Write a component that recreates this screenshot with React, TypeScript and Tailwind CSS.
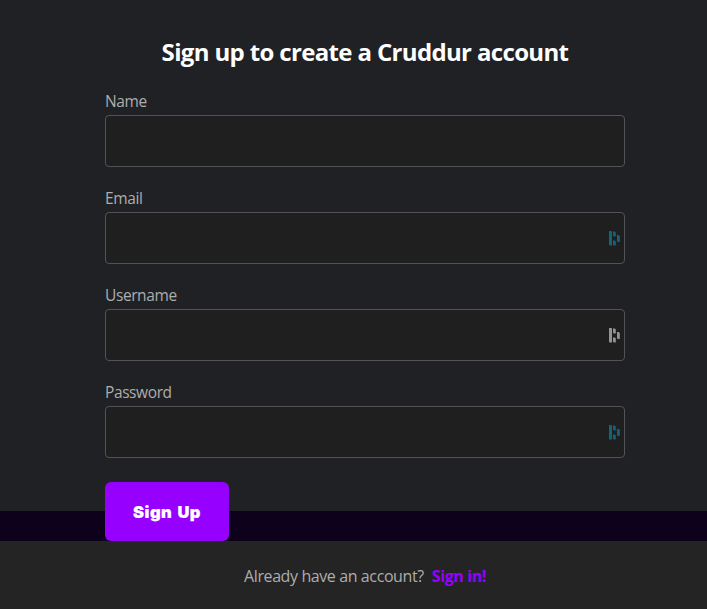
type FieldProps = { label: string; type: string; icon?: string };

function ManagerIcon({ className }: { className: string }) {
  return (
    <svg viewBox="0 0 11 15" width="11" height="15" fill="currentColor" className={className}>
      <path d="M0 0H2.4L3 .6V14.6H.6L0 14ZM4 .6H5.8L6.8 1.4V5.4H4.8L4 4.6ZM4 9.4H5.8L6.8 10.2V14.4H4.8L4 13.6ZM8 4H9.8L10.8 5V11H9L8 10.2Z" />
    </svg>
  );
}

function Field({ label, type, icon }: FieldProps) {
  return (
    <label className="block h-[97px]">
      <span className="block h-[23px] w-fit whitespace-nowrap text-[15.5px] leading-[18px] tracking-[-0.4px] text-[#adadad]">{label}</span>
      <span className="flex h-[52px] items-center rounded-[4px] border border-[#535355] bg-[#1f1f1f] pr-[4px]">
        <input type={type} className="h-full min-w-0 flex-1 bg-transparent px-4 text-white outline-none" />
        {icon && <ManagerIcon className={icon} />}
      </span>
    </label>
  );
}

export default function App() {
  return (
    <div className="h-[609px] w-full overflow-hidden bg-[#0d011b] font-['Open_Sans','Noto_Sans',sans-serif]">
      <main className="h-[511px] w-[730px] bg-[#202124] pt-[35px]">
        <form className="mx-auto w-[520px]">
          <h2 className="mb-[21px] h-[36px] whitespace-nowrap text-center text-[24px] font-bold leading-[34px] tracking-[-0.65px] text-white">
            Sign up to create a Cruddur account
          </h2>
          <Field label="Name" type="text" />
          <Field label="Email" type="email" icon="text-[#12647a]" />
          <Field label="Username" type="text" icon="text-[#959391]" />
          <Field label="Password" type="password" icon="text-[#12647a]" />
          <button
            type="button"
            className="mt-[2px] h-[59px] w-[124px] whitespace-nowrap rounded-[6px] bg-[#9500ff] pt-[2px] font-['Inter',sans-serif] text-[16.5px] font-black tracking-[0.45px] [word-spacing:1.5px] [-webkit-text-stroke:0.2px_white] text-white"
          >
            Sign Up
          </button>
        </form>
      </main>
      <footer className="mt-[30px] flex h-[68px] w-[730px] justify-center gap-2 bg-[#242424] pt-[24px] text-base leading-[22px]">
        <span className="whitespace-nowrap tracking-[-0.4px] text-[#adadad]">Already have an account?</span>
        <a className="whitespace-nowrap font-bold tracking-[-0.4px] text-[#9500ff]">Sign in!</a>
      </footer>
    </div>
  );
}
